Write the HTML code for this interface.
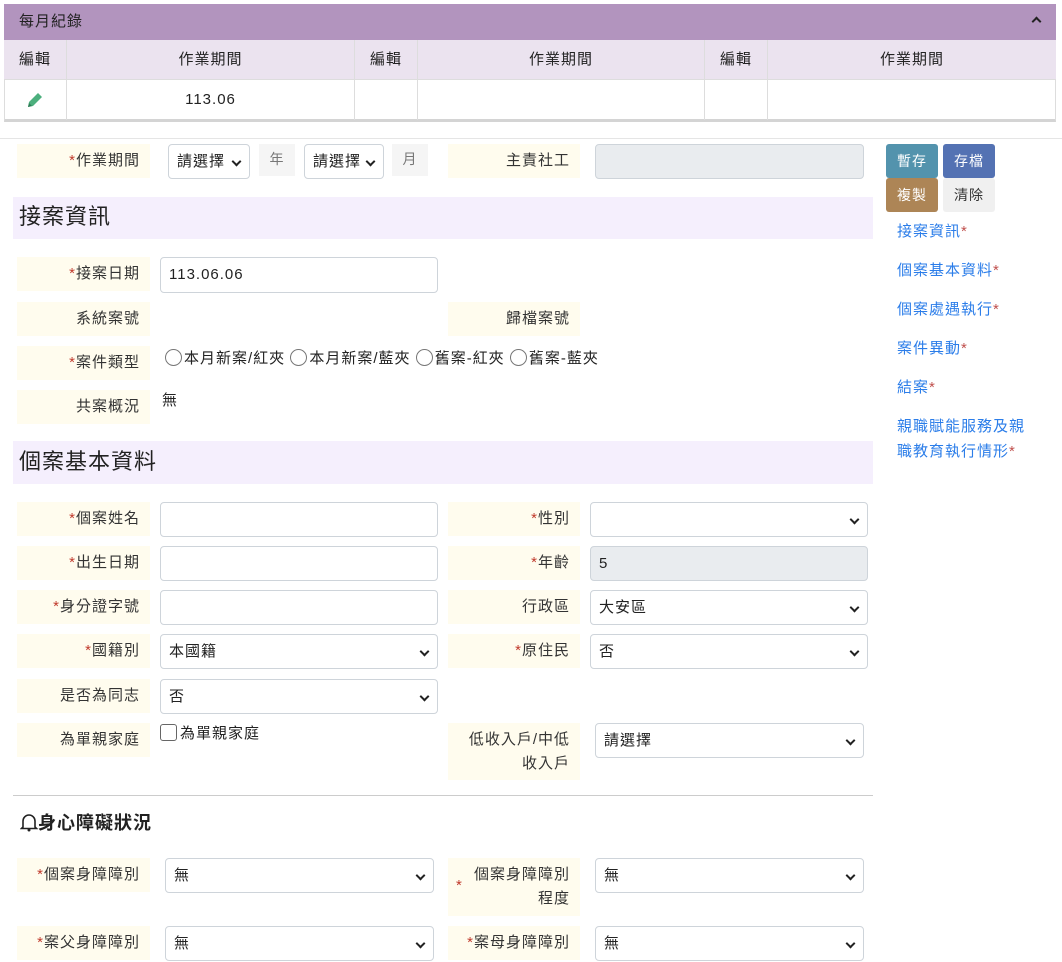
<!DOCTYPE html>
<html><head><meta charset="utf-8"><style>
*{box-sizing:border-box;margin:0;padding:0}
body{width:1062px;height:962px;background:#fff;font-family:"Liberation Sans","Noto Sans CJK TC",sans-serif;font-size:15px;color:#222;position:relative;overflow:hidden;letter-spacing:1px}
.a{position:absolute}
.lb{position:absolute;background:#fffcee;text-align:right;padding-right:10px;line-height:34px;color:#333;font-size:15px}
.s{color:#c0392b}
.in{position:absolute;border:1px solid #ced4da;border-radius:4px;background:#fff;height:35px;line-height:33px;padding-left:8px;font-size:15px}
.sel::after{content:"";position:absolute;right:9px;top:13px;width:5px;height:5px;border-right:2px solid #222;border-bottom:2px solid #222;transform:rotate(45deg)}
.th{position:absolute;top:40px;height:39px;line-height:39px;text-align:center;border-right:1px solid #ddd;font-size:15px}
.td{position:absolute;top:79px;height:41px;line-height:40px;text-align:center;border-right:1px solid #ddd;border-top:1px solid #ddd}
.sec{position:absolute;left:13px;width:860px;background:#f5effd;font-size:22px;padding-left:6px;color:#222}
.btn{position:absolute;width:52px;height:34px;line-height:34px;text-align:center;color:#fff;font-size:14px;border-radius:3px}
.lk{position:absolute;left:897px;color:#2b7de9;font-size:15px;line-height:25px}
.lk span{color:#c0504d}
.rad{display:inline-block;width:17px;height:17px;border:1px solid #777;border-radius:50%;vertical-align:-3px;margin-right:2px}
</style></head><body>
<div class="a" style="left:4px;top:4px;width:1052px;height:118px;border:1px solid #ddd;border-bottom:3px solid #d4d4d4"></div>
<div class="a" style="left:4px;top:4px;width:1052px;height:36px;background:#b294be;line-height:36px;padding-left:15px;font-size:15px;color:#222">每月紀錄</div>
<div class="a" style="left:1033px;top:18px;width:7px;height:7px;border-left:2px solid #222;border-top:2px solid #222;transform:rotate(45deg)"></div>
<div class="a" style="left:4px;top:40px;width:1052px;height:39px;background:#ebe3ef"></div>
<div class="th" style="left:4px;width:63px">編輯</div>
<div class="th" style="left:67px;width:288px">作業期間</div>
<div class="th" style="left:355px;width:63px">編輯</div>
<div class="th" style="left:418px;width:287px">作業期間</div>
<div class="th" style="left:705px;width:63px">編輯</div>
<div class="th" style="left:768px;width:288px;border-right:none">作業期間</div>
<div class="td" style="left:4px;width:63px"><svg width="20" height="20" viewBox="0 0 20 20" style="vertical-align:middle"><path d="M3 17l1-5L13 3l4 4-9 9z" fill="#4caf7d"/><path d="M3 17l1-4 3 3z" fill="#2e7d57"/></svg></div>
<div class="td" style="left:67px;width:288px">113.06</div>
<div class="td" style="left:355px;width:63px"></div>
<div class="td" style="left:418px;width:287px"></div>
<div class="td" style="left:705px;width:63px"></div>
<div class="td" style="left:768px;width:288px;border-right:none"></div>
<div class="a" style="left:0;top:138px;width:1062px;height:1px;background:#e5e5e5"></div>

<div class="lb" style="left:17px;top:144px;width:133px"><span class="s">*</span>作業期間</div>
<div class="in sel" style="left:168px;top:144px;width:82px;height:35px">請選擇</div>
<div class="a" style="left:259px;top:144px;width:36px;height:32px;background:#f5f5f5;color:#777;text-align:center;line-height:30px;font-size:14px">年</div>
<div class="in sel" style="left:304px;top:144px;width:80px;height:35px">請選擇</div>
<div class="a" style="left:392px;top:144px;width:36px;height:32px;background:#f5f5f5;color:#777;text-align:center;line-height:30px;font-size:14px">月</div>
<div class="lb" style="left:448px;top:144px;width:132px">主責社工</div>
<div class="in" style="left:595px;top:144px;width:269px;background:#e9ecef"></div>

<div class="btn" style="left:886px;top:144px;background:#5393ad">暫存</div>
<div class="btn" style="left:943px;top:144px;background:#5472b3">存檔</div>
<div class="btn" style="left:886px;top:178px;background:#ad8556">複製</div>
<div class="btn" style="left:943px;top:178px;background:#f0f0f0;color:#333">清除</div>
<div class="lk" style="top:219px">接案資訊<span>*</span></div>
<div class="lk" style="top:258px">個案基本資料<span>*</span></div>
<div class="lk" style="top:297px">個案處遇執行<span>*</span></div>
<div class="lk" style="top:336px">案件異動<span>*</span></div>
<div class="lk" style="top:375px">結案<span>*</span></div>
<div class="lk" style="top:414px">親職賦能服務及親<br>職教育執行情形<span>*</span></div>

<div class="sec" style="top:197px;height:42px;line-height:40px">接案資訊</div>
<div class="lb" style="left:17px;top:257px;width:133px"><span class="s">*</span>接案日期</div>
<div class="in" style="left:160px;top:257px;width:278px;height:36px;line-height:34px">113.06.06</div>
<div class="lb" style="left:17px;top:302px;width:133px">系統案號</div>
<div class="lb" style="left:448px;top:302px;width:132px">歸檔案號</div>
<div class="lb" style="left:17px;top:346px;width:133px"><span class="s">*</span>案件類型</div>
<div class="a" style="left:165px;top:346px;line-height:26px;font-size:15px;white-space:nowrap"><span class="rad"></span>本月新案/紅夾 <span class="rad"></span>本月新案/藍夾 <span class="rad"></span>舊案-紅夾 <span class="rad"></span>舊案-藍夾</div>
<div class="lb" style="left:17px;top:390px;width:133px">共案概況</div>
<div class="a" style="left:162px;top:390px;line-height:22px">無</div>

<div class="sec" style="top:441px;height:43px;line-height:41px">個案基本資料</div>
<div class="lb" style="left:17px;top:502px;width:133px"><span class="s">*</span>個案姓名</div>
<div class="in" style="left:160px;top:502px;width:278px"></div>
<div class="lb" style="left:448px;top:502px;width:132px"><span class="s">*</span>性別</div>
<div class="in sel" style="left:590px;top:502px;width:278px"></div>
<div class="lb" style="left:17px;top:546px;width:133px"><span class="s">*</span>出生日期</div>
<div class="in" style="left:160px;top:546px;width:278px"></div>
<div class="lb" style="left:448px;top:546px;width:132px"><span class="s">*</span>年齡</div>
<div class="in" style="left:590px;top:546px;width:278px;background:#e9ecef">5</div>
<div class="lb" style="left:17px;top:590px;width:133px"><span class="s">*</span>身分證字號</div>
<div class="in" style="left:160px;top:590px;width:278px"></div>
<div class="lb" style="left:448px;top:590px;width:132px">行政區</div>
<div class="in sel" style="left:590px;top:590px;width:278px">大安區</div>
<div class="lb" style="left:17px;top:634px;width:133px"><span class="s">*</span>國籍別</div>
<div class="in sel" style="left:160px;top:634px;width:278px">本國籍</div>
<div class="lb" style="left:448px;top:634px;width:132px"><span class="s">*</span>原住民</div>
<div class="in sel" style="left:590px;top:634px;width:278px">否</div>
<div class="lb" style="left:17px;top:679px;width:133px">是否為同志</div>
<div class="in sel" style="left:160px;top:679px;width:278px">否</div>
<div class="lb" style="left:17px;top:723px;width:133px">為單親家庭</div>
<div class="a" style="left:160px;top:724px;line-height:20px"><span style="display:inline-block;width:17px;height:17px;border:1px solid #666;border-radius:3px;vertical-align:-3px;margin-right:3px"></span>為單親家庭</div>
<div class="lb" style="left:448px;top:723px;width:132px;height:57px;line-height:24px;padding-top:5px">低收入戶/中低<br>收入戶</div>
<div class="in sel" style="left:595px;top:723px;width:269px">請選擇</div>

<div class="a" style="left:13px;top:795px;width:860px;height:1px;background:#ccc"></div>
<div class="a" style="left:20px;top:810px;font-size:18px;font-weight:bold;line-height:26px;color:#222"><svg width="18" height="20" viewBox="0 0 18 20" style="vertical-align:-3px"><path d="M3 15V9a6 6 0 0112 0v6l1.5 1.5h-15z" fill="none" stroke="#222" stroke-width="1.6"/><circle cx="9" cy="18" r="1.5" fill="#222"/></svg>身心障礙狀況</div>

<div class="lb" style="left:17px;top:858px;width:133px"><span class="s">*</span>個案身障障別</div>
<div class="in sel" style="left:165px;top:858px;width:269px">無</div>
<div class="lb" style="left:448px;top:858px;width:132px;height:58px;line-height:24px;padding-top:5px">個案身障障別<br>程度<span class="s a" style="left:8px;top:16px">*</span></div>
<div class="in sel" style="left:595px;top:858px;width:269px">無</div>
<div class="lb" style="left:17px;top:926px;width:133px"><span class="s">*</span>案父身障障別</div>
<div class="in sel" style="left:165px;top:926px;width:269px">無</div>
<div class="lb" style="left:448px;top:926px;width:132px"><span class="s">*</span>案母身障障別</div>
<div class="in sel" style="left:595px;top:926px;width:269px">無</div>
</body></html>
